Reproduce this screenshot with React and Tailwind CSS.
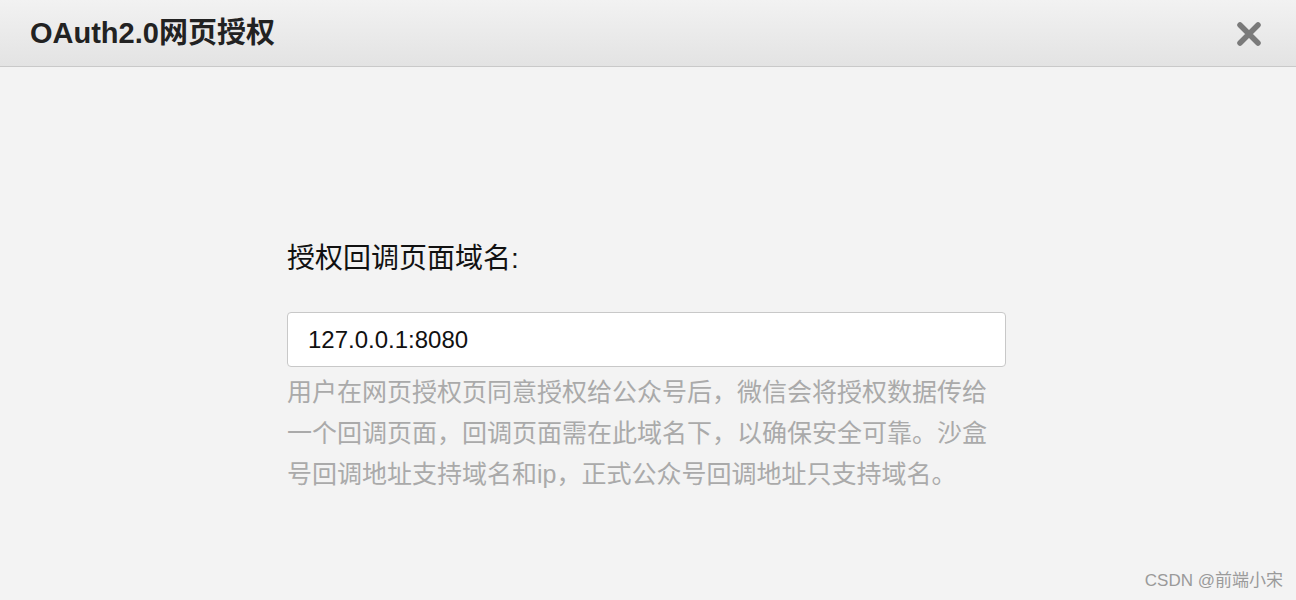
export default function App() {
    const font = { fontFamily: '"Liberation Sans", "Noto Sans CJK SC", sans-serif' };

    return (
        <div className="relative h-[600px] w-full overflow-hidden bg-[#f3f3f3]" style={font}>
            {/* Header */}
            <div className="flex h-[67px] items-center justify-between border-b border-[#c9c9c9] bg-gradient-to-b from-[#f2f2f2] to-[#e3e3e3] pl-[30px] pr-[34px]">
                <h1 className="text-[29px] font-bold leading-none text-[#222]">OAuth2.0网页授权</h1>
                <svg width="26" height="26" viewBox="0 0 26 26" className="mt-[2px]">
                    <path d="M4 4 L22 22 M22 4 L4 22" stroke="#7a7a7a" strokeWidth="5.5" strokeLinecap="round" />
                </svg>
            </div>

            {/* Body */}
            <div className="flex pl-[287px] pt-[173px]">
                <div className="w-[719px]">
                    <div className="text-[28px] leading-[37px] text-[#111]">授权回调页面域名:</div>
                    <div className="mt-[35px] flex h-[55px] items-center rounded-[4px] border border-[#c8c8c8] bg-white px-[20px] text-[24px] text-[#111]">
                        127.0.0.1:8080
                    </div>
                    <p className="mt-[5px] text-[25px] leading-[41px] text-[#aaaaaa]">
                        用户在网页授权页同意授权给公众号后，微信会将授权数据传给一个回调页面，回调页面需在此域名下，以确保安全可靠。沙盒号回调地址支持域名和ip，正式公众号回调地址只支持域名。
                    </p>
                </div>
            </div>

            {/* Watermark */}
            <div className="absolute bottom-[7px] right-[13px] text-[17px] text-[#9a9a9a]">CSDN @前端小宋</div>
        </div>
    );
}
